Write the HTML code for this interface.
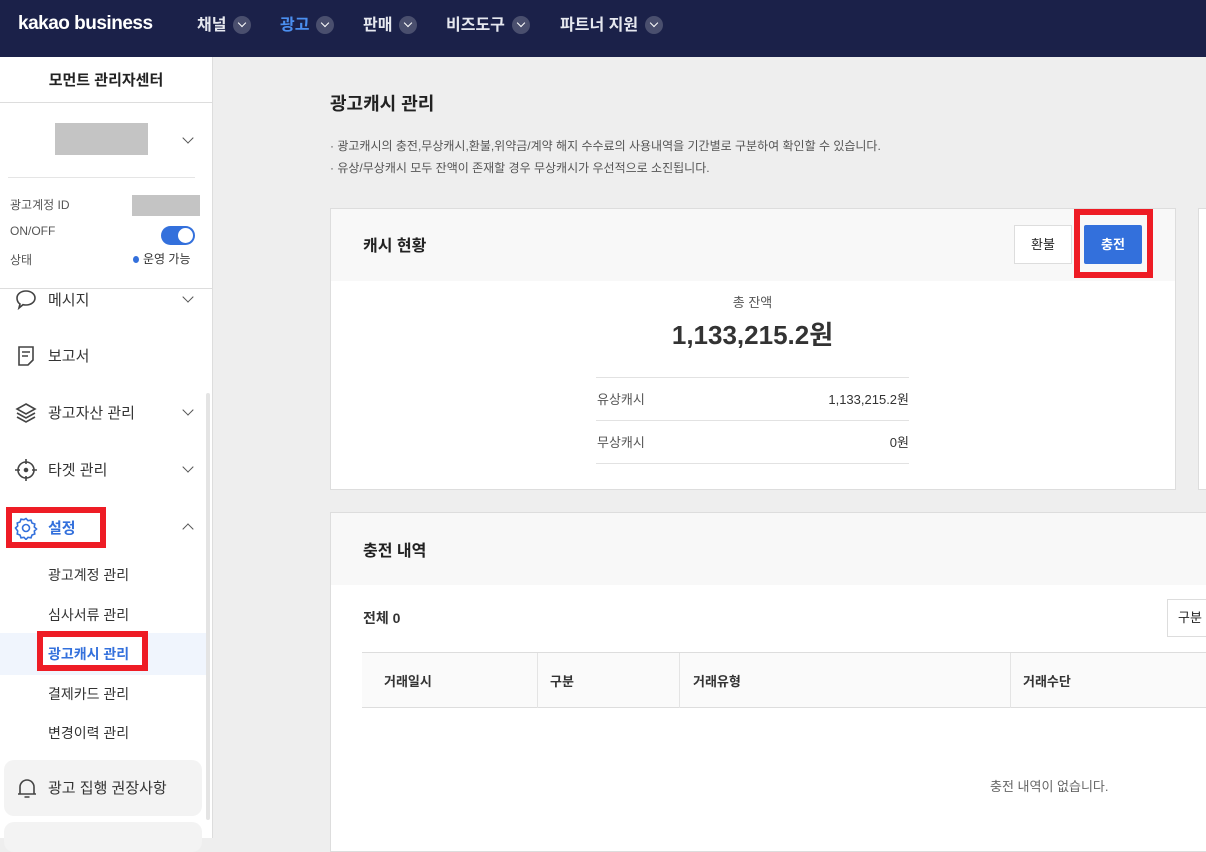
<!DOCTYPE html>
<html><head><meta charset="utf-8"><style>
*{margin:0;padding:0;box-sizing:border-box}
body{width:1206px;height:838px;overflow:hidden;background:#eeeeee;font-family:"Liberation Sans","Noto Sans CJK KR",sans-serif;color:#222;position:relative}
.a{position:absolute;white-space:nowrap}
.nav{left:0;top:0;width:1206px;height:57px;background:#1b2149}
.nv{color:#e6e8ef;font-size:16px;font-weight:bold;top:11px}
.cv{display:inline-block;width:18px;height:18px;border-radius:50%;background:#4a4f6e;vertical-align:middle;margin-left:7px;position:relative;top:-1px}
.cv:after{content:"";position:absolute;left:6px;top:4px;width:5px;height:5px;border-right:1.5px solid #fff;border-bottom:1.5px solid #fff;transform:rotate(45deg)}
.side{left:0;top:57px;width:213px;height:781px;background:#fff;border-right:1px solid #ddd}
.m{font-size:15px;color:#333;left:48px}
.s{font-size:14px;color:#333;left:48px}
.chev{width:8px;height:8px;border-right:1.5px solid #555;border-bottom:1.5px solid #555;transform:rotate(45deg)}
.card{background:#fff;border:1px solid #ddd}
.hd{background:#f8f8f8}
.sm{font-size:12px;color:#555}
</style></head><body>
<div class="a nav"></div>
<div class="a" style="left:18px;top:13px;color:#fff;font-size:19px;font-weight:bold;letter-spacing:-0.5px">kakao business</div>
<div class="a nv" style="left:197px">채널<span class="cv"></span></div>
<div class="a nv" style="left:280px;color:#4b8ff0">광고<span class="cv"></span></div>
<div class="a nv" style="left:363px">판매<span class="cv"></span></div>
<div class="a nv" style="left:446px">비즈도구<span class="cv"></span></div>
<div class="a nv" style="left:560px">파트너 지원<span class="cv"></span></div>

<div class="a side"></div>
<div class="a" style="left:0;top:69px;width:212px;text-align:center;font-size:15px;font-weight:bold">모먼트 관리자센터</div>
<div class="a" style="left:0;top:102px;width:212px;height:1px;background:#ddd"></div>
<div class="a" style="left:55px;top:123px;width:93px;height:32px;background:#c4c4c4"></div>
<div class="a chev" style="left:184px;top:134px"></div>
<div class="a" style="left:8px;top:177px;width:187px;height:1px;background:#e5e5e5"></div>
<div class="a sm" style="left:10px;top:196px">광고계정 ID</div>
<div class="a" style="left:132px;top:195px;width:68px;height:21px;background:#c4c4c4"></div>
<div class="a sm" style="left:10px;top:224px">ON/OFF</div>
<div class="a" style="left:161px;top:226px;width:34px;height:19px;border-radius:10px;background:#3370dc"><div style="position:absolute;right:2px;top:2px;width:15px;height:15px;border-radius:50%;background:#fff"></div></div>
<div class="a sm" style="left:10px;top:251px">상태</div>
<div class="a" style="left:133px;top:256px;width:6px;height:7px;border-radius:50%;background:#3370dc"></div>
<div class="a" style="left:143px;top:250px;font-size:12px;color:#333">운영 가능</div>
<div class="a" style="left:0;top:288px;width:212px;height:1px;background:#ddd"></div>

<svg class="a" style="left:14px;top:288px" width="24" height="24" viewBox="0 0 24 24" fill="none" stroke="#444" stroke-width="1.6"><path d="M12 3c5 0 9 3 9 7s-4 7-9 7c-1 0-2 0-3-.3L5 20l1-4C4 14.7 3 12.5 3 10c0-4 4-7 9-7z"/></svg>
<div class="a m" style="left:48px;top:289px">메시지</div>
<div class="a chev" style="left:184px;top:293px"></div>
<svg class="a" style="left:14px;top:344px" width="24" height="24" viewBox="0 0 24 24" fill="none" stroke="#444" stroke-width="1.6"><path d="M5 3h14v13l-5 5H5z M8 8h8 M8 12h6"/></svg>
<div class="a m" style="top:345px">보고서</div>
<svg class="a" style="left:14px;top:401px" width="24" height="24" viewBox="0 0 24 24" fill="none" stroke="#444" stroke-width="1.6"><path d="M12 3l9 5-9 5-9-5z M3 12l9 5 9-5 M3 16l9 5 9-5"/></svg>
<div class="a m" style="top:402px">광고자산 관리</div>
<div class="a chev" style="left:184px;top:406px"></div>
<svg class="a" style="left:13px;top:457px" width="26" height="26" viewBox="0 0 26 26" fill="none" stroke="#444" stroke-width="1.6"><circle cx="13" cy="13" r="8"/><circle cx="13" cy="13" r="1.5" fill="#444"/><path d="M13 2v5 M13 19v5 M2 13h5 M19 13h5"/></svg>
<div class="a m" style="top:459px">타겟 관리</div>
<div class="a chev" style="left:184px;top:463px"></div>

<div class="a" style="left:6px;top:507px;width:100px;height:41px;border:6px solid #ee1c25"></div>
<svg class="a" style="left:14px;top:516px" width="24" height="24" viewBox="0 0 24 24" fill="none" stroke="#3370dc" stroke-width="1.6"><path d="M12 2.5l2 2.2 3-.5 1 2.8 2.8 1-.5 3 2.2 2-2.2 2 .5 3-2.8 1-1 2.8-3-.5-2 2.2-2-2.2-3 .5-1-2.8-2.8-1 .5-3L1.5 12l2.2-2-.5-3 2.8-1 1-2.8 3 .5z"/><circle cx="12" cy="12" r="3.5"/></svg>
<div class="a m" style="top:517px;color:#3370dc;font-weight:bold">설정</div>
<div class="a chev" style="left:184px;top:525px;transform:rotate(225deg)"></div>
<div class="a s" style="top:565px">광고계정 관리</div>
<div class="a s" style="top:605px">심사서류 관리</div>
<div class="a" style="left:0;top:633px;width:208px;height:42px;background:#f0f5fd"></div>
<div class="a" style="left:37px;top:631px;width:111px;height:40px;border:6px solid #ee1c25;background:#fff"></div>
<div class="a s" style="top:644px;color:#3370dc;font-weight:bold">광고캐시 관리</div>
<div class="a s" style="top:684px">결제카드 관리</div>
<div class="a s" style="top:723px">변경이력 관리</div>
<div class="a" style="left:4px;top:760px;width:198px;height:56px;border-radius:10px;background:#f3f3f3"></div>
<svg class="a" style="left:16px;top:776px" width="22" height="24" viewBox="0 0 22 24" fill="none" stroke="#444" stroke-width="1.6"><path d="M4 18V11a7 7 0 0 1 14 0v7 M2 18h18 M8.5 21h5"/></svg>
<div class="a m" style="top:777px">광고 집행 권장사항</div>
<div class="a" style="left:4px;top:822px;width:198px;height:30px;border-radius:10px;background:#f3f3f3"></div>
<div class="a" style="left:206px;top:393px;width:4px;height:427px;background:#e4e4e4;border-radius:2px"></div>

<div class="a" style="left:330px;top:90px;font-size:18px;font-weight:bold">광고캐시 관리</div>
<div class="a sm" style="left:330px;top:137px">· 광고캐시의 충전,무상캐시,환불,위약금/계약 해지 수수료의 사용내역을 기간별로 구분하여 확인할 수 있습니다.</div>
<div class="a sm" style="left:330px;top:159px">· 유상/무상캐시 모두 잔액이 존재할 경우 무상캐시가 우선적으로 소진됩니다.</div>

<div class="a card" style="left:330px;top:208px;width:846px;height:282px"></div>
<div class="a hd" style="left:331px;top:209px;width:844px;height:72px"></div>
<div class="a" style="left:363px;top:232px;font-size:16px;font-weight:bold">캐시 현황</div>
<div class="a" style="left:1014px;top:225px;width:58px;height:39px;background:#fff;border:1px solid #ddd;font-size:13px;text-align:center;line-height:37px">환불</div>
<div class="a" style="left:1074px;top:209px;width:79px;height:69px;border:6px solid #ee1c25"></div>
<div class="a" style="left:1084px;top:225px;width:58px;height:39px;background:#3370dc;color:#fff;font-weight:bold;font-size:13px;text-align:center;line-height:39px;border-radius:2px">충전</div>
<div class="a" style="left:596px;top:292px;width:313px;text-align:center;font-size:13px;color:#555">총 잔액</div>
<div class="a" style="left:596px;top:315px;width:313px;text-align:center;font-size:26px;font-weight:bold;color:#333">1,133,215.2원</div>
<div class="a" style="left:596px;top:377px;width:313px;height:1px;background:#e2e2e2"></div>
<div class="a" style="left:596px;top:420px;width:313px;height:1px;background:#e2e2e2"></div>
<div class="a" style="left:596px;top:463px;width:313px;height:1px;background:#e2e2e2"></div>
<div class="a" style="left:597px;top:389px;font-size:13px;color:#555">유상캐시</div>
<div class="a" style="left:700px;top:389px;width:209px;text-align:right;font-size:13px;color:#333">1,133,215.2원</div>
<div class="a" style="left:597px;top:432px;font-size:13px;color:#555">무상캐시</div>
<div class="a" style="left:700px;top:432px;width:209px;text-align:right;font-size:13px;color:#333">0원</div>
<div class="a card" style="left:1198px;top:208px;width:20px;height:282px"></div>

<div class="a card" style="left:330px;top:512px;width:900px;height:340px"></div>
<div class="a hd" style="left:331px;top:513px;width:880px;height:72px"></div>
<div class="a" style="left:363px;top:537px;font-size:16px;font-weight:bold">충전 내역</div>
<div class="a" style="left:363px;top:608px;font-size:14px;font-weight:bold;color:#333">전체 0</div>
<div class="a" style="left:1167px;top:599px;width:60px;height:38px;background:#fff;border:1px solid #ddd;font-size:13px;line-height:36px;padding-left:10px">구분</div>
<div class="a" style="left:362px;top:652px;width:850px;height:56px;background:#fafafa;border-top:1px solid #ddd;border-bottom:1px solid #ddd"></div>
<div class="a" style="left:537px;top:653px;width:1px;height:55px;background:#e4e4e4"></div>
<div class="a" style="left:679px;top:653px;width:1px;height:55px;background:#e4e4e4"></div>
<div class="a" style="left:1010px;top:653px;width:1px;height:55px;background:#e4e4e4"></div>
<div class="a" style="left:384px;top:671px;font-size:13px;font-weight:bold;color:#333">거래일시</div>
<div class="a" style="left:550px;top:671px;font-size:13px;font-weight:bold;color:#333">구분</div>
<div class="a" style="left:693px;top:671px;font-size:13px;font-weight:bold;color:#333">거래유형</div>
<div class="a" style="left:1023px;top:671px;font-size:13px;font-weight:bold;color:#333">거래수단</div>
<div class="a" style="left:990px;top:776px;font-size:13px;color:#666">충전 내역이 없습니다.</div>
</body></html>
